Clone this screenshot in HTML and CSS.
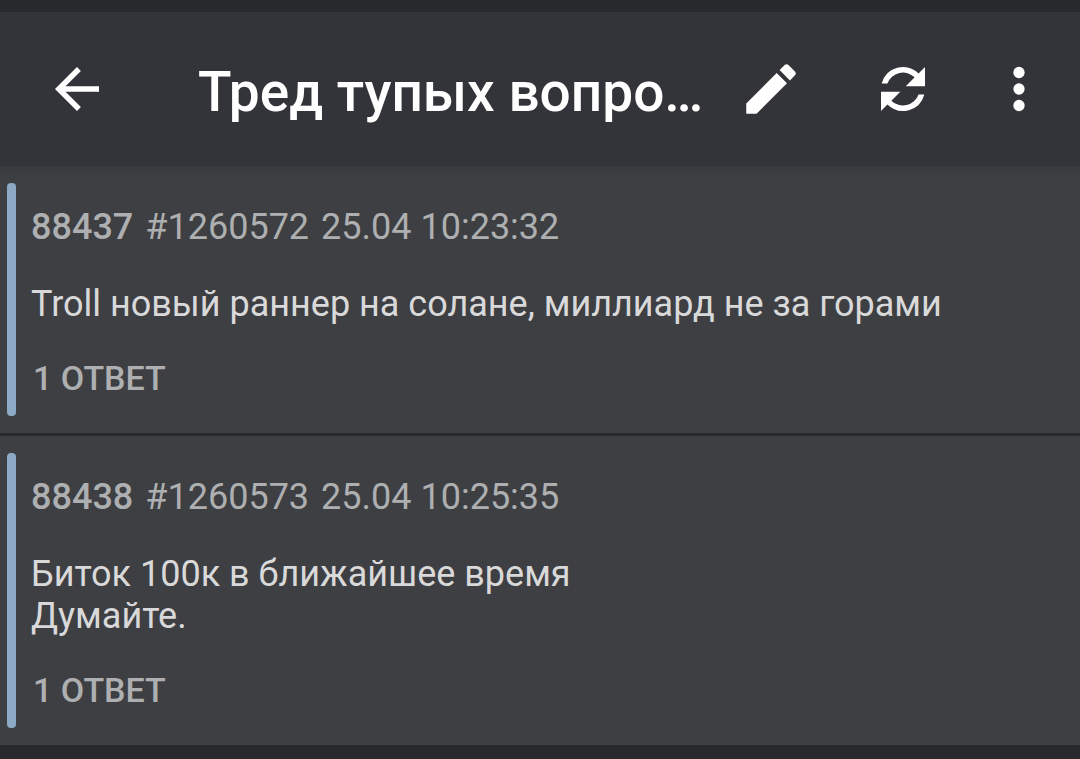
FILE: index.html
```
<!DOCTYPE html>
<html lang="ru">
  <head>
    <meta charset="utf-8">
    <meta name="viewport" content="width=device-width, initial-scale=1">
    <title>Тред тупых вопро…</title>
    <link rel="stylesheet" href="styles.css">
  </head>
  <body>
    <header class="toolbar">
      <button class="btn btn-back" aria-label="Назад">
        <svg class="icon" viewBox="0 0 24 24"><path d="M20 11H7.83l5.59-5.59L12 4l-8 8 8 8 1.41-1.41L7.83 13H20v-2z"/></svg>
      </button>
      <h1 class="title">Тред тупых вопро…</h1>
      <button class="btn" aria-label="Написать">
        <svg class="icon" viewBox="0 0 24 24"><path d="M3 17.25V21h3.75L17.81 9.94l-3.75-3.75L3 17.25zM20.71 7.04c.39-.39.39-1.02 0-1.41l-2.34-2.34c-.39-.39-1.02-.39-1.41 0l-1.83 1.83 3.75 3.75 1.83-1.83z"/></svg>
      </button>
      <button class="btn" aria-label="Обновить">
        <svg class="icon" viewBox="0 0 24 24"><path d="M4.25 10A8 8 0 0 1 17.65 6.35L20 4v7h-7l3.24-3.24A6 6 0 0 0 6.34 10zM19.75 14A8 8 0 0 1 6.35 17.65L4 20v-7h7l-3.24 3.24A6 6 0 0 0 17.66 14z"/></svg>
      </button>
      <button class="btn btn-more" aria-label="Ещё">
        <svg class="icon" viewBox="0 0 24 24"><circle cx="12" cy="6" r="2.05"/><circle cx="12" cy="12" r="2.05"/><circle cx="12" cy="18" r="2.05"/></svg>
      </button>
    </header>

    <main class="posts">
      <article class="post">
        <div class="post-mark"></div>
        <div class="post-content">
          <div class="post-info">
            <b class="post-index">88437</b>
            <span>#1260572</span>
            <time>25.04 10:23:32</time>
          </div>
          <p class="post-text">Troll новый раннер на солане, миллиард не за горами</p>
          <button class="replies">1 ОТВЕТ</button>
        </div>
      </article>
      <article class="post">
        <div class="post-mark"></div>
        <div class="post-content">
          <div class="post-info">
            <b class="post-index">88438</b>
            <span>#1260573</span>
            <time>25.04 10:25:35</time>
          </div>
          <p class="post-text">Биток 100к в ближайшее время<br>Думайте.</p>
          <button class="replies">1 ОТВЕТ</button>
        </div>
      </article>
    </main>
  </body>
</html>
```
FILE: styles.css
```
* {
  box-sizing: border-box;
}
body {
  margin: 0;
  padding-top: 12px;
  background-color: #28292d;
  font-family: Roboto, sans-serif;
  color: #d9d9da;
}
button {
  border: none;
  padding: 0;
  background: none;
  font-family: inherit;
  cursor: pointer;
}
.toolbar {
  display: flex;
  align-items: center;
  height: 154px;
  padding-right: 11px;
  background-color: #333439;
}
.btn {
  display: flex;
  justify-content: center;
  flex: none;
  width: 132px;
  color: white;
}
.btn-back {
  width: 154px;
}
.btn-more {
  width: 100px;
}
.icon {
  width: 66px;
  height: 66px;
  fill: currentColor;
}
.title {
  flex: 1;
  min-width: 0;
  margin: 0;
  padding-top: 6px;
  padding-left: 44px;
  overflow: hidden;
  white-space: nowrap;
  text-overflow: ellipsis;
  font-size: 55px;
  line-height: 66px;
  font-weight: 500;
  color: white;
}
.posts {
  display: grid;
  gap: 3px;
}
.post {
  display: flex;
  gap: 15px;
  padding: 17px 7px;
  background-color: #3e3f43;
}
.post:first-child {
  background-image: linear-gradient(#3a3b3e, #3e3f43 12px);
}
.post-mark {
  flex: none;
  width: 9px;
  border-radius: 4px;
  background-color: #8caac5;
}
.post-content {
  flex: 1;
  min-width: 0;
  padding: 23px 0 18px;
}
.post-info {
  display: flex;
  gap: 12px;
  font-size: 36px;
  line-height: 42px;
  color: #aeafb1;
}
.post-index {
  font-weight: 500;
}
.post-text {
  margin: 35px 0 33px;
  font-size: 36px;
  line-height: 42px;
}
.replies {
  display: block;
  padding-left: 2px;
  font-size: 34px;
  line-height: 40px;
  font-weight: 500;
  color: #aeafb1;
}
```
